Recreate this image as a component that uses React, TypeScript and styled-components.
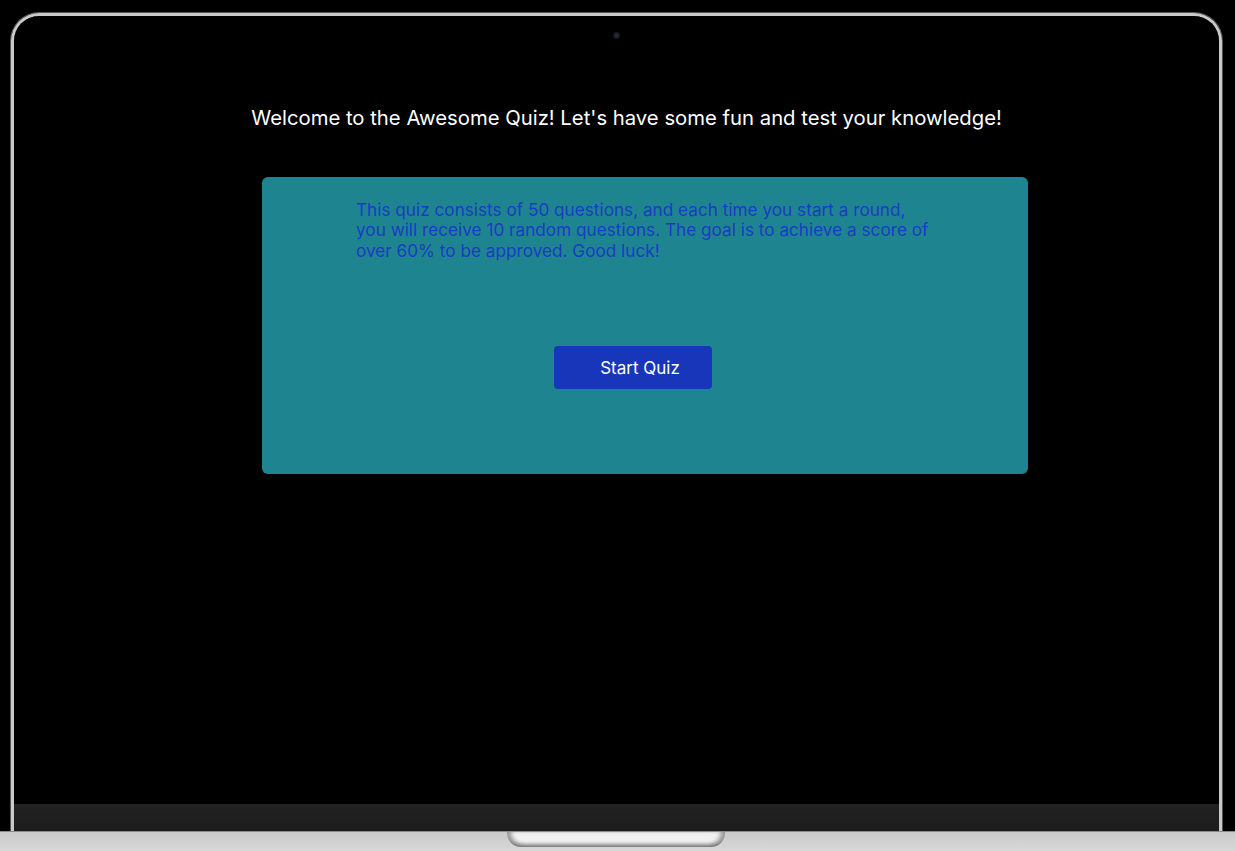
import React from 'react';
import styled, {createGlobalStyle} from 'styled-components';

const GlobalStyle = createGlobalStyle`
    html, body {
        margin: 0;
        padding: 0;
        background: #000;
    }
    body {
        font-family: Inter, "Noto Sans", "Liberation Sans", sans-serif;
    }
`;

const Page = styled.div`
    width: 1235px;
    height: 851px;
    background: #000;
    display: flex;
    flex-direction: column;
    overflow: hidden;
`;

const Lid = styled.div`
    flex: 1;
    margin: 13px 13px 0 11px;
    border: 3px solid #c9c9c9;
    border-bottom: none;
    border-radius: 28px 28px 0 0;
    box-shadow: inset 0 0 0 1px #7a7a7a, 0 0 0 1px #555;
    display: flex;
    flex-direction: column;
    overflow: hidden;
`;

const Screen = styled.div`
    flex: 1;
    background: #000;
    display: flex;
    flex-direction: column;
`;

const Camera = styled.div`
    width: 7px;
    height: 7px;
    border-radius: 50%;
    background: radial-gradient(circle at 50% 50%, #2a3448 0%, #141820 60%, #0a0a0a 100%);
    margin: 16px 0 0 599px;
`;

const Title = styled.h1`
    margin: 67px 0 0 20px;
    text-align: center;
    color: #fff;
    font-size: 20.3px;
    font-weight: 400;
    line-height: 24px;
`;

const Card = styled.div`
    width: 766px;
    height: 297px;
    margin: 47px 0 0 248px;
    box-sizing: border-box;
    padding: 23px 0 0;
    background: #1e8590;
    border-radius: 6px;
    display: flex;
    flex-direction: column;
    align-items: center;
`;

const Intro = styled.p`
    margin: 0;
    width: 578px;
    color: #1b3bc4;
    font-size: 17.2px;
    line-height: 20.4px;
`;

const StartButton = styled.button`
    margin-top: 85px;
    margin-left: -24px;
    width: 158px;
    height: 43px;
    padding: 0 0 0 14px;
    border: none;
    border-radius: 4px;
    background: #1736b9;
    color: #fff;
    font-family: inherit;
    font-size: 17px;
    cursor: pointer;
`;

const Bezel = styled.div`
    height: 27px;
    background: linear-gradient(#222, #1c1c1c);
`;

const Base = styled.div`
    height: 19px;
    background: linear-gradient(#cacaca, #d8d8d8);
    border-top: 1px solid #8a8a8a;
    display: flex;
    justify-content: center;
`;

const Notch = styled.div`
    width: 218px;
    height: 15px;
    margin-left: -4px;
    background: #f1f1f1;
    border-radius: 0 0 14px 14px;
    box-shadow: inset 4px -2px 4px rgba(0, 0, 0, 0.35), inset -4px -2px 4px rgba(0, 0, 0, 0.35);
`;

const App = () => {
    return (
        <>
            <GlobalStyle/>
            <Page>
                <Lid>
                    <Screen>
                        <Camera/>
                        <Title>Welcome to the Awesome Quiz! Let's have some fun and test your knowledge!</Title>
                        <Card>
                            <Intro>
                                This quiz consists of 50 questions, and each time you start a round, you will
                                receive 10 random questions. The goal is to achieve a score of over 60% to be
                                approved. Good luck!
                            </Intro>
                            <StartButton>Start Quiz</StartButton>
                        </Card>
                    </Screen>
                    <Bezel/>
                </Lid>
                <Base>
                    <Notch/>
                </Base>
            </Page>
        </>
    );
};

export default App;
